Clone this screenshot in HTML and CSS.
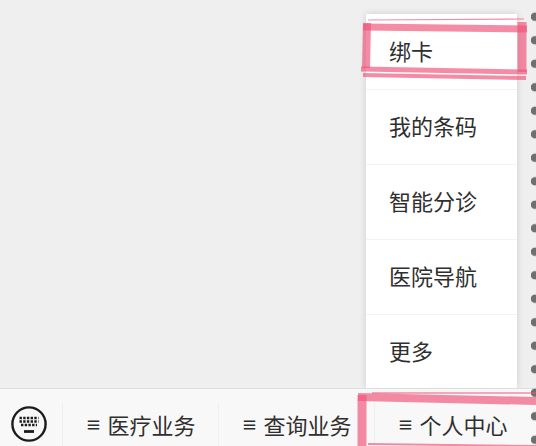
FILE: index.html
```html
<!DOCTYPE html>
<html lang="zh-CN">
<head>
    <meta charset="UTF-8">
    <meta name="viewport" content="width=device-width, initial-scale=1.0">
    <title>个人中心</title>
    <link rel="stylesheet" href="styles.css">
</head>
<body>
    <div class="screen">
        <div class="content">
            <ul class="menu">
                <li>绑卡</li>
                <li>我的条码</li>
                <li>智能分诊</li>
                <li>医院导航</li>
                <li>更多</li>
            </ul>
        </div>

        <div class="tabbar">
            <div class="keyboard">
                <svg width="38" height="38" viewBox="0 0 38 38">
                    <circle cx="19" cy="19" r="16.6" fill="none" stroke="#1c1c1c" stroke-width="2.4"/>
                    <path d="M9.5 13h19M9.5 16.5h19M11 20h16" stroke="#1c1c1c" stroke-width="2.4" stroke-dasharray="2.4 1.3" fill="none"/>
                    <path d="M14 26.5h10" stroke="#1c1c1c" stroke-width="2.8" fill="none"/>
                </svg>
            </div>
            <div class="tab"><span class="bars">≡</span>医疗业务</div>
            <div class="tab"><span class="bars">≡</span>查询业务</div>
            <div class="tab tab-last"><span class="bars">≡</span>个人中心</div>
        </div>

        <!-- dotted edge of the photo -->
        <div class="dots"></div>

        <!-- hand drawn marks over the screenshot -->
        <svg class="marks" width="536" height="446" viewBox="0 0 536 446">
            <g fill="none" stroke="#f0567c" stroke-opacity="0.68">
                <path d="M368 20 L524 19" stroke-width="1.2"/>
                <path d="M363 27 L527 29" stroke-width="7"/>
                <path d="M367 23 L366 68" stroke-width="8"/>
                <path d="M522 22 L522 72" stroke-width="9"/>
                <path d="M361 69 L527 72" stroke-width="5"/>
                <path d="M363 75 L526 78" stroke-width="4"/>
                <path d="M358 397 L536 401" stroke-width="8"/>
                <path d="M372 393 L536 393" stroke-width="1.5"/>
                <path d="M362 395 L362 446" stroke-width="9"/>
                <path d="M368 444 L536 446" stroke-width="2"/>
            </g>
        </svg>
    </div>
</body>
</html>
```

FILE: styles.css
```css
* {
    box-sizing: border-box;
}

body {
    margin: 0;
    font-family: "Noto Sans CJK SC", "Liberation Sans", sans-serif;
    color: #2f2f2f;
}

.screen {
    position: relative;
    display: flex;
    flex-direction: column;
    width: 536px;
    height: 446px;
    overflow: hidden;
    background-color: #efefef;
}

.content {
    display: flex;
    justify-content: flex-end;
    height: 388px;
    padding: 14px 19px 0 0;
}

.menu {
    width: 151px;
    margin: 0;
    padding: 0;
    list-style: none;
    background-color: #fff;
    box-shadow: 0 0 7px rgba(0, 0, 0, 0.14);
}

.menu li {
    display: flex;
    align-items: center;
    height: 75px;
    padding-left: 23px;
    padding-bottom: 4px;
    font-size: 22px;
    border-top: 1px solid #f3f3f3;
}

.menu li:first-child {
    border-top: none;
}

.tabbar {
    display: flex;
    flex: 1;
    align-items: stretch;
    padding-top: 14px;
    background-color: #f8f8f8;
    border-top: 1px solid #dedede;
}

.keyboard {
    display: flex;
    align-items: center;
    justify-content: center;
    width: 62px;
    padding-right: 4px;
    margin-top: -1px;
}

.tab {
    display: flex;
    align-items: center;
    justify-content: center;
    width: 156px;
    padding-bottom: 2px;
    font-size: 22px;
    border-left: 1px solid #efefef;
}

.tab-last {
    width: 162px;
    padding-right: 6px;
}

.bars {
    margin-right: 6px;
    font-size: 16px;
    font-weight: 700;
}

.dots {
    position: absolute;
    top: 5px;
    right: -3px;
    width: 8px;
    height: 441px;
    background-image: radial-gradient(circle, #6f6f6f 3.8px, transparent 4.6px);
    background-size: 8px 23.5px;
}

.marks {
    position: absolute;
    top: 0;
    left: 0;
}
```
